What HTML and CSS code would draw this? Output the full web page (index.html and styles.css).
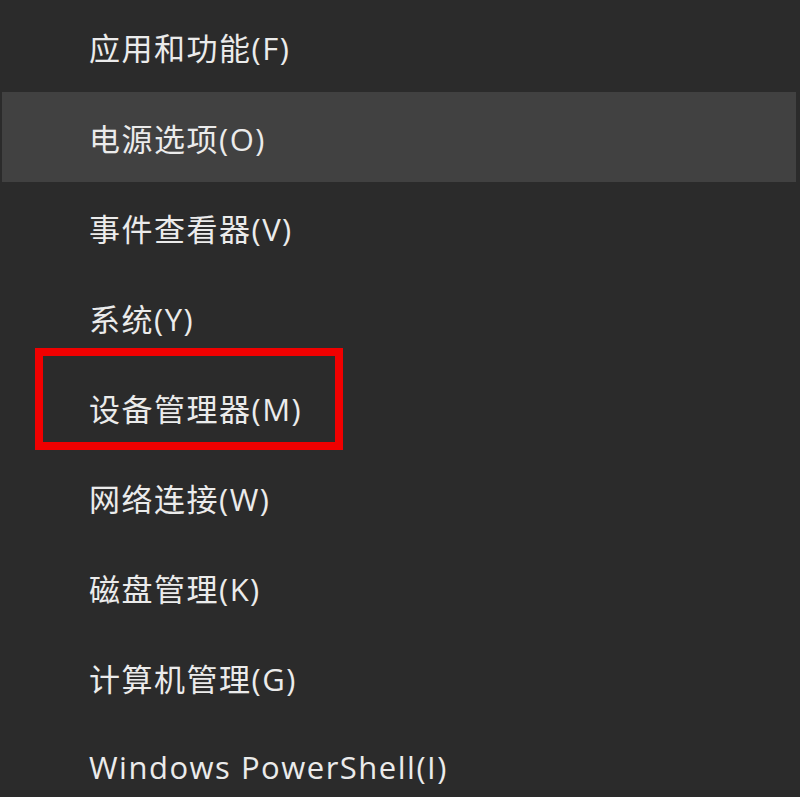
FILE: index.html
```html
<!DOCTYPE html>
<html lang="zh-CN">
<head>
    <meta charset="UTF-8">
    <title>Win+X 菜单</title>
    <link rel="stylesheet" href="styles.css">
</head>
<body>

    <ul class="menu">
        <li class="item">应用和功能(F)</li>
        <li class="item active">电源选项(O)</li>
        <li class="item">事件查看器(V)</li>
        <li class="item">系统(Y)</li>
        <li class="item marked">设备管理器(M)<span class="mark"></span></li>
        <li class="item">网络连接(W)</li>
        <li class="item">磁盘管理(K)</li>
        <li class="item">计算机管理(G)</li>
        <li class="item">Windows PowerShell(I)</li>
    </ul>

</body>
</html>
```

FILE: styles.css
```css
/* Reset CSS */
* {
    margin: 0;
    padding: 0;
    box-sizing: border-box;
}

body {
    font-family: "Open Sans", "Noto Sans CJK SC", sans-serif;
    background-color: #2b2b2b;
    color: #ebebeb;
    height: 797px;
    overflow: hidden;
}

.menu {
    list-style: none;
    padding: 0 4px 0 2px;
}

.item {
    height: 90px;
    display: flex;
    align-items: center;
    padding-left: 87px;
    font-size: 31px;
    letter-spacing: 1.5px;
    position: relative;
}

.item:first-child {
    height: 92px;
}

.item.active {
    background-color: #414141;
}

/* red annotation box */
.mark {
    position: absolute;
    left: 33px;
    top: -14px;
    width: 308px;
    height: 102px;
    border: 8px solid #f00000;
}
```
